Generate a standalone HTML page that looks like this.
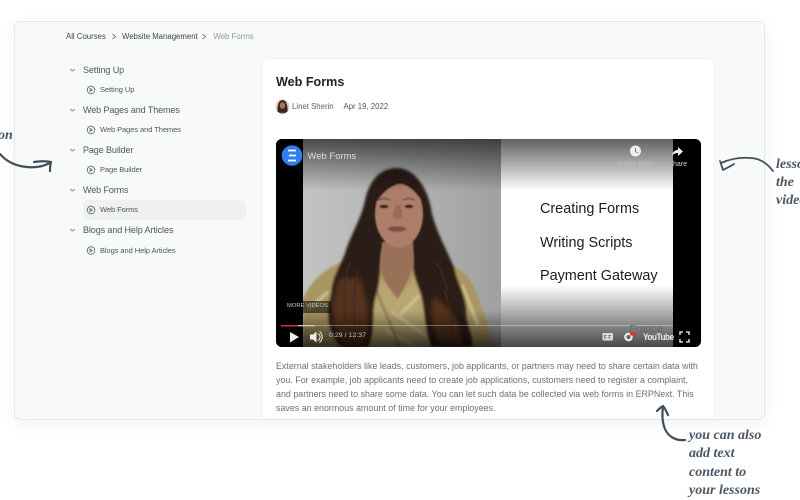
<!DOCTYPE html>
<html><head><meta charset="utf-8">
<style>
*{box-sizing:border-box;margin:0;padding:0}
html,body{width:800px;height:500px;overflow:hidden;background:#fff;font-family:"Liberation Sans",sans-serif}
.a{position:absolute;white-space:nowrap}
.card{position:absolute;left:14px;top:21px;width:751px;height:399px;background:#f8fafa;border:1px solid #e6e9eb;border-radius:6px;box-shadow:0 4px 16px rgba(30,50,70,.06)}
.main{position:absolute;left:263px;top:59px;width:451px;height:360px;background:#fff;border-radius:6px 6px 0 0;box-shadow:0 0 2px rgba(30,50,70,.08)}
.crumb{font-size:7.800px;color:#3f464d;top:31px;line-height:11px}
.sec{font-size:9px;color:#4c5560;left:83px;line-height:12px;letter-spacing:-.1px}
.les{font-size:7.500px;color:#4c5560;left:100px;line-height:10px;letter-spacing:-.07px}
.p{font-size:8.900px;color:#68717b;left:276px;line-height:14px;letter-spacing:.01px}
.hand{font-family:"Liberation Serif",serif;font-style:italic;font-weight:bold;font-size:14px;color:#4a5663;line-height:18px}
.slide{font-size:14.400px;color:#1d1d1d;left:540px;line-height:18px}
</style></head><body>
<div class="card"></div>
<div class="main"></div>

<div class="a crumb" style="left:66px">All Courses</div>
<svg class="a" style="left:111px;top:33px" width="6" height="7" viewBox="0 0 6 7"><path d="M1.500 1l3 2.500-3 2.500" fill="none" stroke="#4c5560" stroke-width=".8"/></svg>
<div class="a crumb" style="left:122px">Website Management</div>
<svg class="a" style="left:201px;top:33px" width="6" height="7" viewBox="0 0 6 7"><path d="M1.500 1l3 2.500-3 2.500" fill="none" stroke="#4c5560" stroke-width=".8"/></svg>
<div class="a crumb" style="left:213.500px;color:#8f979f">Web Forms</div>

<div class="a" style="left:83px;top:200px;width:163px;height:20px;background:#eef0f2;border-radius:5px"></div>

<svg class="a" style="left:0;top:0" width="260" height="260" viewBox="0 0 260 260">
<g fill="none" stroke="#858d95" stroke-width=".9">
<path d="M70 69l2.500 2 2.500-2M70 109l2.500 2 2.500-2M70 149l2.500 2 2.500-2M70 189l2.500 2 2.500-2M70 229l2.500 2 2.500-2"/>
<g stroke="#5b646d" stroke-width=".8">
<circle cx="91" cy="90" r="3.800"/><circle cx="91" cy="130" r="3.800"/><circle cx="91" cy="170" r="3.800"/><circle cx="91" cy="210" r="3.800"/><circle cx="91" cy="250.500" r="3.800"/>
<path d="M90 88.500l2.300 1.500-2.300 1.500zM90 128.500l2.300 1.500-2.300 1.500zM90 168.500l2.300 1.500-2.300 1.500zM90 208.500l2.300 1.500-2.300 1.500zM90 249l2.300 1.500-2.300 1.500z"/>
</g></g></svg>

<div class="a sec" style="top:64px">Setting Up</div>
<div class="a les" style="top:85px">Setting Up</div>
<div class="a sec" style="top:104px">Web Pages and Themes</div>
<div class="a les" style="top:125px">Web Pages and Themes</div>
<div class="a sec" style="top:144px">Page Builder</div>
<div class="a les" style="top:165px">Page Builder</div>
<div class="a sec" style="top:184px">Web Forms</div>
<div class="a les" style="top:205px">Web Forms</div>
<div class="a sec" style="top:224px">Blogs and Help Articles</div>
<div class="a les" style="top:246px">Blogs and Help Articles</div>

<div class="a" style="left:276px;top:73.500px;font-size:12.600px;font-weight:bold;color:#1c2128;line-height:17px">Web Forms</div>
<svg class="a" style="left:275px;top:99px" width="15" height="15" viewBox="0 0 15 15"><defs><clipPath id="av"><circle cx="7.500" cy="7.500" r="7"/></clipPath></defs><g clip-path="url(#av)"><rect width="15" height="15" fill="#d9d3cc"/><path d="M2.500 15C2 8 3 1 7.500 1S13 8 12.500 15z" fill="#3a2522"/><ellipse cx="7.500" cy="6.500" rx="2.700" ry="3.300" fill="#a8715a"/><path d="M4 15c.5-3 6.500-3 7 0z" fill="#6e2f3e"/></g></svg>
<div class="a" style="left:292px;top:101px;font-size:7.800px;color:#59626c;line-height:11px">Linet Sherin</div>
<div class="a" style="left:343.500px;top:101px;font-size:7.800px;color:#4f5862;line-height:11px">Apr 19, 2022</div>

<svg class="a" style="left:276px;top:139px;border-radius:6px" width="425" height="208" viewBox="276 139 425 208">
<defs>
<linearGradient id="top" x1="0" y1="0" x2="0" y2="1"><stop offset="0" stop-color="#000" stop-opacity=".62"/><stop offset="1" stop-color="#000" stop-opacity="0"/></linearGradient>
<linearGradient id="bot" x1="0" y1="0" x2="0" y2="1"><stop offset="0" stop-color="#000" stop-opacity="0"/><stop offset="1" stop-color="#000" stop-opacity=".72"/></linearGradient>
<linearGradient id="bg" x1="0" y1="0" x2="1" y2="0"><stop offset="0" stop-color="#c2c4c4"/><stop offset=".5" stop-color="#b3b5b5"/><stop offset="1" stop-color="#9fa1a1"/></linearGradient>
<filter id="b2"><feGaussianBlur stdDeviation="2.500"/></filter>
<filter id="b1"><feGaussianBlur stdDeviation="1.200"/></filter>
<filter id="b05"><feGaussianBlur stdDeviation=".7"/></filter>
</defs>
<rect x="276" y="139" width="425" height="208" fill="#000"/>
<rect x="303" y="139" width="198" height="208" fill="url(#bg)"/>
<rect x="501" y="139" width="172" height="208" fill="#fff"/>
<g filter="url(#b1)">
<path d="M303 298C312 280 325 268 345 261L440 261C458 266 470 275 475 290 484 310 490 330 494 347H303z" fill="#a99660"/>
<path d="M376 272L397 300 418 272 432 347H366z" fill="#b8a672"/>
<path d="M308 310L328 292M478 325L462 285M392 312L425 335M385 330L415 347M400 315L420 295" stroke="#cfc296" stroke-width="3" fill="none"/>
<path d="M376 290L400 347" stroke="#4a3c28" stroke-width="1.200" fill="none"/>
</g>
<path filter="url(#b1)" d="M397 168C383 168 372 176 366 196 362 218 352 232 346 250 342 264 332 278 332 292 328 308 326 322 334 336 336 342 340 347 344 347L368 347C376 330 370 312 376 294 380 282 380 262 382 250L412 250C412 264 414 276 420 290 426 306 424 330 432 347L472 347C474 336 466 326 466 312 466 296 456 282 454 268 448 252 438 236 432 214 428 184 412 168 397 168z" fill="#2a1c18"/>
<path filter="url(#b2)" d="M340 278C330 300 330 330 344 346H364C372 325 368 298 360 278zM434 296C428 315 434 335 440 345H462C464 326 450 308 434 296z" fill="#56301f"/>
<path filter="url(#b05)" d="M350 262C344 280 342 300 346 322M358 270C354 290 352 310 356 335M444 290C450 305 452 320 452 338M436 262C442 272 446 282 448 292" stroke="#3f2a22" stroke-width="1.500" fill="none"/>
<g filter="url(#b05)">
<path d="M382 242L380 268C384 283 396 296 398 298 406 285 412 272 414 262L413 240z" fill="#997058"/>
<ellipse cx="399" cy="214" rx="24" ry="33.500" fill="#ad7f6a"/>
<path d="M375 204C377 188 386 179 399 179 412 179 422 188 424 204 416 192 408 184 400 184 391 185 382 193 375 204z" fill="#2a1c18"/>
<ellipse cx="384" cy="206.500" rx="4.500" ry="1.800" fill="#2a1a17"/><ellipse cx="409" cy="206.500" rx="4.500" ry="1.800" fill="#2a1a17"/>
<path d="M378 200q6-3 12 0M403 200q6-3 12 0" stroke="#3a2520" stroke-width="1" fill="none"/>
<path d="M395 205l-2 13q5 3 10 0l-2-13z" fill="#a06a53"/>
<ellipse cx="397" cy="229" rx="9" ry="2.800" fill="#7f4a45"/>
</g>
<rect x="276" y="139" width="425" height="52" fill="url(#top)"/>
<rect x="501" y="285" width="172" height="62" fill="url(#bot)"/>
<rect x="276" y="310" width="225" height="37" fill="url(#bot)"/>
<rect x="276" y="139" width="27" height="208" fill="#000"/>
<rect x="673" y="139" width="28" height="208" fill="#000"/>
<rect x="281" y="301" width="50" height="12" fill="#000" opacity=".55"/>
<circle cx="292" cy="155.500" r="10.300" fill="#2f80ed"/>
<path d="M288 150.500h8M289 155.500h7M288 160.500h8" stroke="#fff" stroke-width="1.800" fill="none"/>
<circle cx="635.500" cy="151" r="5.500" fill="#eee"/><path d="M635.500 148v3.500l2.500 1.500" stroke="#777" stroke-width="1" fill="none"/>
<path d="M678 147v2.800c-3.500 .3-5.500 2.500-6 6 1.500-2 3.500-2.800 6-2.800v3l5-4.500z" fill="#eee"/>
<rect x="281" y="325" width="392" height="1" fill="#fff" opacity=".35"/>
<rect x="281" y="325" width="34" height="1.300" fill="#ccc"/>
<rect x="281" y="325" width="17" height="1.300" fill="#e8222b"/>
<path d="M290 332l9 5-9 5.500z" fill="#eee"/>
<path d="M310 334.500h3l3.500-3v11l-3.500-3h-3z" fill="#eee"/><path d="M318 333.500a4 4 0 0 1 0 7M319.500 331.500a7 7 0 0 1 0 11" stroke="#eee" stroke-width="1" fill="none"/>
<rect x="602.500" y="333" width="10.500" height="7.500" rx="1" fill="#ddd"/>
<path d="M606.500 335.500h-2v2.500h2M611 335.500h-2v2.500h2" stroke="#555" stroke-width=".7" fill="none"/>
<circle cx="628.500" cy="337" r="3.200" fill="none" stroke="#eee" stroke-width="2.200"/>
<rect x="630" y="332" width="6" height="3.500" rx=".8" fill="#d6372f"/>
<path d="M680 335v-3h3M686 332h3v3M689 339v3h-3M683 342h-3v-3" stroke="#fff" stroke-width="1.300" fill="none"/>
</svg>

<div class="a" style="left:307.500px;top:150px;font-size:9.300px;color:#ddd;line-height:12px;letter-spacing:.1px">Web Forms</div>
<div class="a" style="left:617px;top:160px;font-size:7px;color:#bdbdbd;line-height:9px">Watch later</div>
<div class="a" style="left:673px;top:160px;font-size:7px;color:#d5d5d5;line-height:9px">hare</div>
<div class="a slide" style="top:200px">Creating Forms</div>
<div class="a slide" style="top:233.500px">Writing Scripts</div>
<div class="a slide" style="top:267px">Payment Gateway</div>
<div class="a" style="left:287px;top:302px;font-size:5.800px;color:#ccc;line-height:9px">MORE VIDEOS</div>
<div class="a" style="left:329px;top:331px;font-size:6.800px;color:#c4c4c4;line-height:10px;letter-spacing:.1px">0:29 / 12:37</div>
<div class="a" style="left:629.500px;top:324px;font-size:10.500px;color:#6a6a6a;line-height:11px">Frappe</div>
<div class="a" style="left:643px;top:332px;font-size:9.500px;font-weight:bold;color:#eee;line-height:11px;letter-spacing:-.5px;transform:scaleX(.86);transform-origin:left">YouTube</div>

<div class="a p" style="top:359px">External stakeholders like leads, customers, job applicants, or partners may need to share certain data with</div>
<div class="a p" style="top:373px">you. For example, job applicants need to create job applications, customers need to register a complaint,</div>
<div class="a p" style="top:387px">and partners need to share some data. You can let such data be collected via web forms in ERPNext. This</div>
<div class="a p" style="top:401px">saves an enormous amount of time for your employees.</div>

<svg class="a" style="left:0;top:0" width="800" height="500" viewBox="0 0 800 500">
<g fill="none" stroke="#424e5c" stroke-linecap="round" stroke-linejoin="round">
<path d="M0 154C6 161 14 166 27 167 36 168 44 166 50 163" stroke-width="2.200"/>
<path d="M34 162C40 161 46 161 51 162 50 165 50 168 50 171" stroke-width="2.200"/>
<path d="M773 171C766 162 758 158 750 158 740 157 730 159 721 163" stroke-width="1.800"/>
<path d="M720 161C721 164 722 167 723 170 727 168 731 166 734 164" stroke-width="1.800"/>
<path d="M685 440C675 441 668 436 665 429 662 422 662 414 663 407" stroke-width="2.200"/>
<path d="M657 411C659 409 661 407 663 406 665 408 666 411 668 415" stroke-width="2.200"/>
</g></svg>
<div class="a hand" style="left:-2px;top:127px">on</div>
<div class="a hand" style="left:776px;top:156px">lesso<br>the<br>video</div>
<div class="a hand" style="left:689px;top:427px;line-height:18.300px">you can also<br>add text<br>content to<br>your lessons</div>
</body></html>
